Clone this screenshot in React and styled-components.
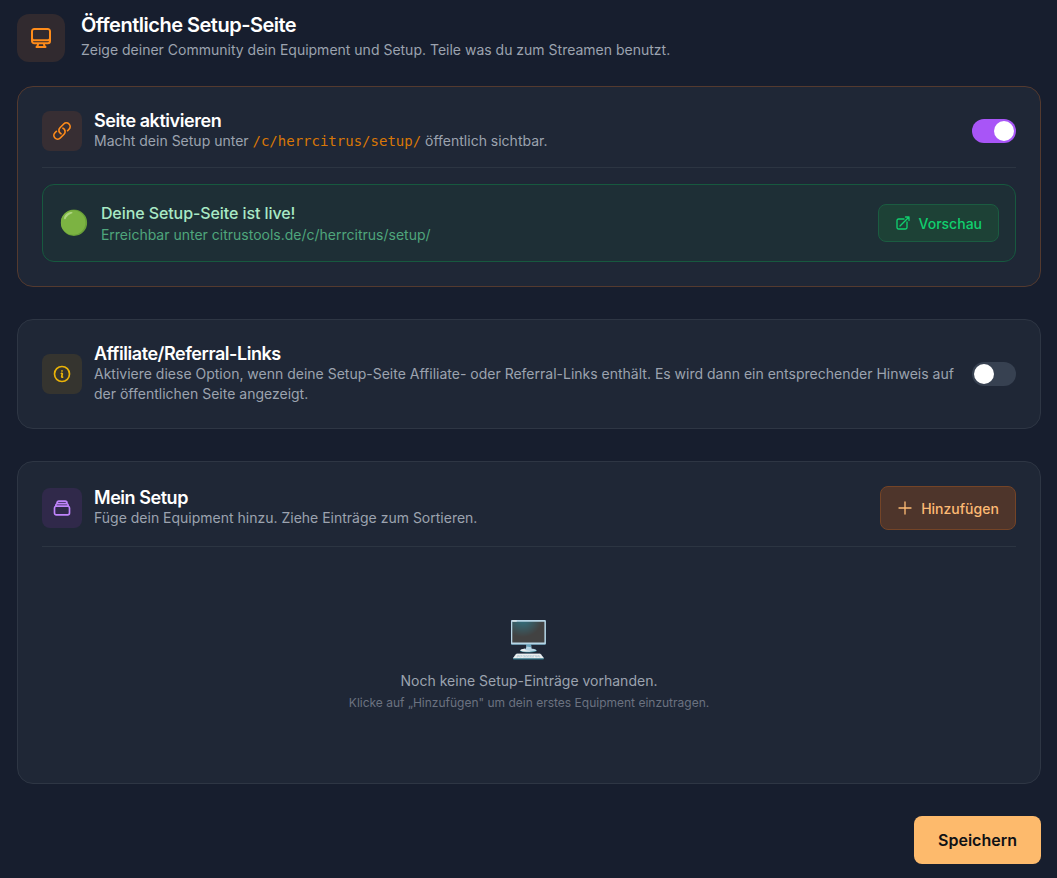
import styled, { createGlobalStyle } from 'styled-components';

const GlobalStyle = createGlobalStyle`
  html, body {
    margin: 0;
    padding: 0;
    background: #171e2e;
    font-family: Inter, "Noto Sans", sans-serif;
  }
  * { box-sizing: border-box; }
`;

const Page = styled.div`
  display: flex;
  flex-direction: column;
  padding: 14px 16px 14px 17px;
  min-height: 878px;
`;

const PageHeader = styled.header`
  display: flex;
  gap: 16px;
  margin-bottom: 24px;
`;

const IconBox = styled.div`
  flex: none;
  display: flex;
  align-items: center;
  justify-content: center;
  width: ${(p) => p.$size}px;
  height: ${(p) => p.$size}px;
  border-radius: ${(p) => (p.$size > 40 ? 12 : 8)}px;
  background: ${(p) => p.$bg};
  color: ${(p) => p.$color};
`;

const PageTitle = styled.h1`
  margin: 0;
  font-size: 20px;
  line-height: 22px;
  font-weight: 600;
  letter-spacing: -0.5px;
  color: #fff;
`;

const PageSub = styled.p`
  margin: 4px 0 0;
  font-size: 14px;
  line-height: 20px;
  color: #9ca3af;
`;

const Card = styled.section`
  background: #1f2736;
  border: 1px solid ${(p) => p.$border || '#2e3644'};
  border-radius: 16px;
  padding: 24px;
  margin-bottom: 32px;
`;

const Row = styled.div`
  display: flex;
  align-items: center;
  gap: 12px;
`;

const RowText = styled.div`
  flex: 1;
  min-width: 0;
`;

const RowTitle = styled.h2`
  margin: 0;
  font-size: 18px;
  line-height: 20px;
  font-weight: 600;
  letter-spacing: -0.45px;
  color: #fff;
`;

const RowSub = styled.p`
  margin: 0;
  font-size: 14px;
  line-height: 20px;
  color: #9ca3af;
`;

const Code = styled.code`
  font-family: "DejaVu Sans Mono", "Liberation Mono", monospace;
  font-size: 14px;
  line-height: 1;
  color: #d97706;
`;

const Toggle = styled.div`
  flex: none;
  display: flex;
  align-items: center;
  justify-content: ${(p) => (p.$on ? 'flex-end' : 'flex-start')};
  width: 44px;
  height: 24px;
  padding: 2px;
  border-radius: 12px;
  background: ${(p) => (p.$on ? '#a855f7' : '#374151')};
`;

const Knob = styled.span`
  width: 20px;
  height: 20px;
  border-radius: 50%;
  background: #fff;
`;

const Divider = styled.hr`
  margin: 16px 0;
  border: 0;
  border-top: 1px solid #2c3542;
`;

const LiveBox = styled.div`
  display: flex;
  align-items: center;
  gap: 12px;
  height: 78px;
  padding: 0 16px;
  border: 1px solid #17593f;
  border-radius: 12px;
  background: #1e2f36;
`;

const Emoji = styled.span`
  flex: none;
  display: block;
  font-size: ${(p) => p.$size}px;
  line-height: ${(p) => p.$line}px;
  font-family: "Noto Color Emoji", sans-serif;
`;

const LiveTitle = styled.div`
  font-size: 16px;
  line-height: 24px;
  font-weight: 500;
  letter-spacing: -0.08px;
  color: #a9e9c5;
`;

const LiveSub = styled.div`
  font-size: 14px;
  line-height: 20px;
  color: #4fa67c;
`;

const Button = styled.div`
  flex: none;
  display: flex;
  align-items: center;
  justify-content: center;
  gap: 8px;
  border-radius: 8px;
  font-size: 14px;
  font-weight: 500;
`;

const PreviewButton = styled(Button)`
  height: 38px;
  padding: 0 16px;
  border: 1px solid #1b5c41;
  background: #1d4136;
  color: #10cf6e;
`;

const AddButton = styled(Button)`
  height: 44px;
  width: 136px;
  border: 1px solid #744427;
  background: #4e352b;
  color: #fdba74;
`;

const Empty = styled.div`
  display: flex;
  flex-direction: column;
  align-items: center;
  padding: 57px 0 48px;
`;

const EmptyText = styled.p`
  margin: 11px 0 0;
  font-size: 14px;
  line-height: 20px;
  color: #9ca3af;
`;

const EmptyHint = styled.p`
  margin: 4px 0 0;
  font-size: 12px;
  line-height: 16px;
  color: #6b7280;
`;

const Footer = styled.div`
  display: flex;
  justify-content: flex-end;
`;

const SaveButton = styled(Button)`
  width: 127px;
  height: 48px;
  background: #fdba6c;
  color: #0f1115;
  font-size: 16px;
  font-weight: 600;
`;

const Svg = ({ size = 20, children }) => (
  <svg width={size} height={size} viewBox="0 0 24 24" fill="none" stroke="currentColor" strokeWidth={2} strokeLinecap="round" strokeLinejoin="round">
    {children}
  </svg>
);

const MonitorIcon = () => (
  <Svg size={24}>
    <path d="M9 17.25v1.007a3 3 0 01-.879 2.122L7.5 21h9l-.621-.621A3 3 0 0115 18.257V17.25m6-12V15a2.25 2.25 0 01-2.25 2.25H5.25A2.25 2.25 0 013 15V5.25m18 0A2.25 2.25 0 0018.75 3H5.25A2.25 2.25 0 003 5.25m18 0V12a2.25 2.25 0 01-2.25 2.25H5.25A2.25 2.25 0 013 12V5.25" />
  </Svg>
);

const LinkIcon = () => (
  <Svg>
    <path d="M13.19 8.688a4.5 4.5 0 011.242 7.244l-4.5 4.5a4.5 4.5 0 01-6.364-6.364l1.757-1.757m13.35-.622l1.757-1.757a4.5 4.5 0 00-6.364-6.364l-4.5 4.5a4.5 4.5 0 001.242 7.244" />
  </Svg>
);

const InfoIcon = () => (
  <Svg>
    <path d="M11.25 11.25l.041-.02a.75.75 0 011.063.852l-.708 2.836a.75.75 0 001.063.853l.041-.021M21 12a9 9 0 11-18 0 9 9 0 0118 0zm-9-3.75h.008v.008H12V8.25z" />
  </Svg>
);

const StackIcon = () => (
  <Svg>
    <path d="M6 6.878V6a2.25 2.25 0 012.25-2.25h7.5A2.25 2.25 0 0118 6v.878m-12 0c.235-.083.487-.128.75-.128h10.5c.263 0 .515.045.75.128m-12 0A2.25 2.25 0 004.5 9v.878m13.5-3A2.25 2.25 0 0119.5 9v.878m0 0a2.246 2.246 0 00-.75-.128H5.25c-.263 0-.515.045-.75.128m15 0A2.25 2.25 0 0121 12v6a2.25 2.25 0 01-2.25 2.25H5.25A2.25 2.25 0 013 18v-6c0-.98.626-1.813 1.5-2.122" />
  </Svg>
);

const ExternalIcon = () => (
  <Svg size={16}>
    <path d="M13.5 6H5.25A2.25 2.25 0 003 8.25v10.5A2.25 2.25 0 005.25 21h10.5A2.25 2.25 0 0018 18.75V10.5m-10.5 6L21 3m0 0h-5.25M21 3v5.25" />
  </Svg>
);

const PlusIcon = () => (
  <Svg size={16}>
    <path d="M12 3v18M3 12h18" />
  </Svg>
);

const App = () => (
  <>
    <GlobalStyle />
    <Page>
      <PageHeader>
        <IconBox $size={48} $bg="#312a2f" $color="#ff8c1a">
          <MonitorIcon />
        </IconBox>
        <div>
          <PageTitle>Öffentliche Setup-Seite</PageTitle>
          <PageSub>Zeige deiner Community dein Equipment und Setup. Teile was du zum Streamen benutzt.</PageSub>
        </div>
      </PageHeader>

      <Card $border="#543a2f">
        <Row>
          <IconBox $size={40} $bg="#372e33" $color="#ff8c1a">
            <LinkIcon />
          </IconBox>
          <RowText>
            <RowTitle>Seite aktivieren</RowTitle>
            <RowSub>
              Macht dein Setup unter <Code>/c/herrcitrus/setup/</Code> öffentlich sichtbar.
            </RowSub>
          </RowText>
          <Toggle $on>
            <Knob />
          </Toggle>
        </Row>
        <Divider />
        <LiveBox>
          <Emoji $size={24} $line={32}>🟢</Emoji>
          <RowText>
            <LiveTitle>Deine Setup-Seite ist live!</LiveTitle>
            <LiveSub>Erreichbar unter citrustools.de/c/herrcitrus/setup/</LiveSub>
          </RowText>
          <PreviewButton>
            <ExternalIcon />
            Vorschau
          </PreviewButton>
        </LiveBox>
      </Card>

      <Card>
        <Row>
          <IconBox $size={40} $bg="#35342f" $color="#eab308">
            <InfoIcon />
          </IconBox>
          <RowText>
            <RowTitle>Affiliate/Referral-Links</RowTitle>
            <RowSub>
              Aktiviere diese Option, wenn deine Setup-Seite Affiliate- oder Referral-Links enthält. Es wird dann ein entsprechender Hinweis auf der öffentlichen Seite angezeigt.
            </RowSub>
          </RowText>
          <Toggle>
            <Knob />
          </Toggle>
        </Row>
      </Card>

      <Card>
        <Row>
          <IconBox $size={40} $bg="#30294a" $color="#c084fc">
            <StackIcon />
          </IconBox>
          <RowText>
            <RowTitle>Mein Setup</RowTitle>
            <RowSub>Füge dein Equipment hinzu. Ziehe Einträge zum Sortieren.</RowSub>
          </RowText>
          <AddButton>
            <PlusIcon />
            Hinzufügen
          </AddButton>
        </Row>
        <Divider />
        <Empty>
          <Emoji $size={36} $line={40}>🖥️</Emoji>
          <EmptyText>Noch keine Setup-Einträge vorhanden.</EmptyText>
          <EmptyHint>Klicke auf „Hinzufügen" um dein erstes Equipment einzutragen.</EmptyHint>
        </Empty>
      </Card>

      <Footer>
        <SaveButton>Speichern</SaveButton>
      </Footer>
    </Page>
  </>
);

export default App;
